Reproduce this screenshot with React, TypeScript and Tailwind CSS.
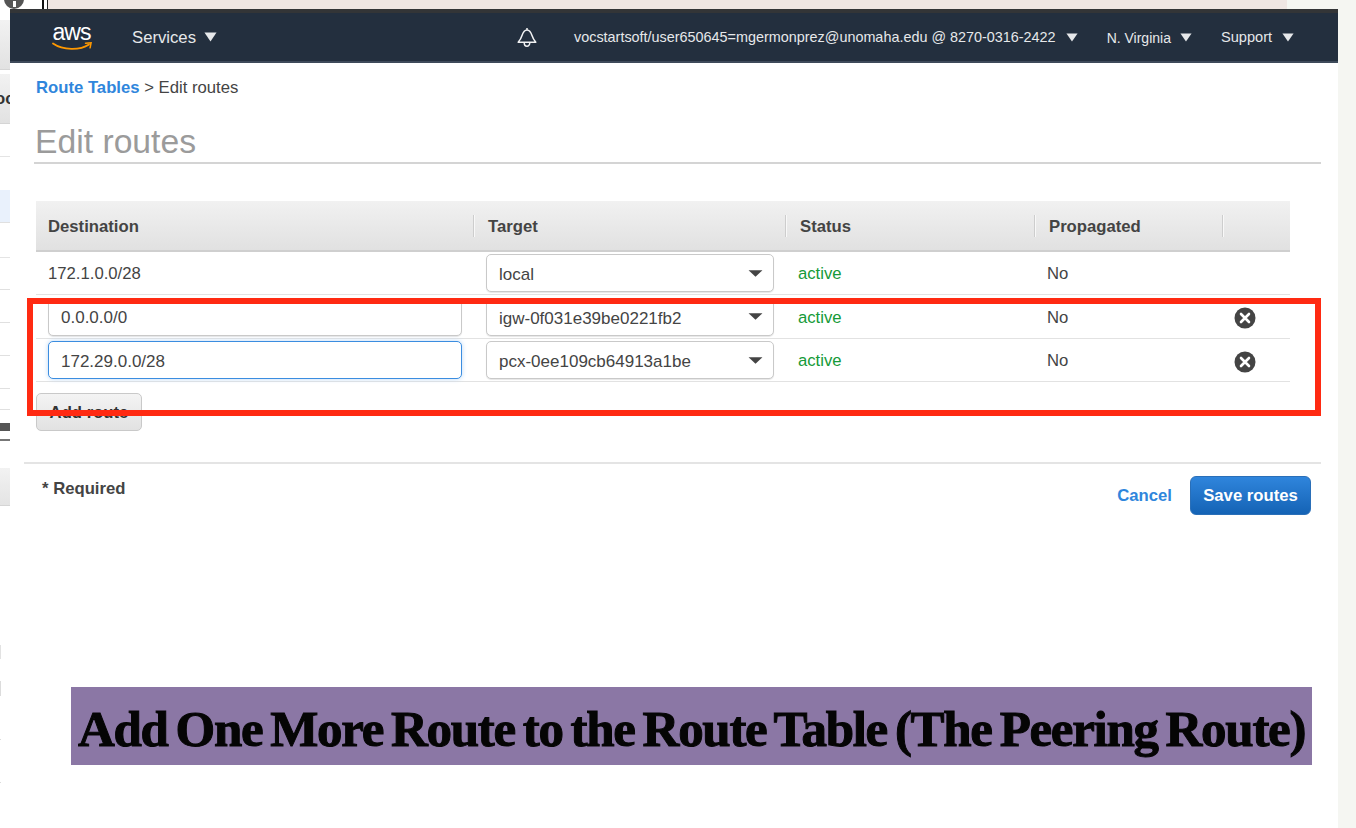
import React from 'react';

const Caret = ({ className }: { className: string }) => (
  <svg viewBox="0 0 14 10" preserveAspectRatio="none" className={className} fill="currentColor">
    <path d="M0.5 0.5h13L7 9.5z" />
  </svg>
);

const RemoveIcon = () => (
  <svg viewBox="0 0 22 22" className="w-[22px] h-[22px]">
    <circle cx="11" cy="11" r="10.5" fill="#444" />
    <path d="M7 7l8 8M15 7l-8 8" stroke="#fff" strokeWidth="2.6" strokeLinecap="round" />
  </svg>
);

const SelectBox = ({ value }: { value: string }) => (
  <div className="ml-3 flex h-[38px] w-[288px] items-center justify-between rounded-[5px] border border-[#c9c9c9] bg-white pl-[12px] pr-[10px] shadow-[0_1px_1px_#e6e6e6]">
    <span className="pt-[4px] text-[17px]">{value}</span>
    <Caret className="h-[7px] w-[15px] text-[#444]" />
  </div>
);

const InputBox = ({ value, focused }: { value: string; focused?: boolean }) => (
  <div
    className={
      focused
        ? 'ml-3 flex h-[38px] w-[414px] items-center rounded-[5px] border border-[#3b8de0] bg-white pl-[12px] pt-[4px] text-[17px] shadow-[0_0_5px_#bcd8f5]'
        : 'ml-3 flex h-[38px] w-[414px] items-center rounded-[5px] border border-[#c9c9c9] bg-white pl-[12px] pt-[2px] text-[17px] shadow-[0_1px_1px_#e6e6e6]'
    }
  >
    {value}
  </div>
);

const rows = [
  { dest: '172.1.0.0/28', target: 'local', height: 'h-[43px]' },
  { dest: '0.0.0.0/0', target: 'igw-0f031e39be0221fb2', height: 'h-[44px]', removable: true },
  { dest: '172.29.0.0/28', target: 'pcx-0ee109cb64913a1be', height: 'h-[43px]', removable: true, focused: true },
];

const headers = ['Destination', 'Target', 'Status', 'Propagated', ''];

const leftLines = ['mt-[31px]', 'mt-[32px]', 'mt-[32px]', 'mt-[32px]', 'mt-[20px]'];

const LeftSliver = () => (
  <div className="flex w-[10px] shrink-0 flex-col overflow-hidden bg-white">
    <div className="mt-[11px] h-[50px] border-b border-[#d5d5d5] bg-gradient-to-b from-[#f2f2f2] to-[#e2e2e2]" />
    <div className="mt-[4px] flex h-[50px] items-center whitespace-nowrap border-b border-[#d5d5d5] bg-gradient-to-b from-[#f2f2f2] to-[#e2e2e2] pl-0 text-[16.7px] font-bold text-[#333]">
      <span className="-ml-[5px]">oc</span>
    </div>
    <div className="mt-[32px] h-px bg-[#e4e4e4]" />
    <div className="mt-[33px] h-[33px] border-b border-[#e0e0e0] bg-[#e9f1fc]" />
    <div className="mt-[34px] h-px bg-[#e4e4e4]" />
    {leftLines.map((m, i) => (
      <div key={i} className={`${m} h-px bg-[#e0e0e0]`} />
    ))}
    <div className="mt-[13px] h-[8px] bg-[#555]" />
    <div className="mt-[8px] h-[2px] bg-[#777]" />
    <div className="mt-[27px] h-[38px] border-b border-[#d5d5d5] bg-gradient-to-b from-[#f2f2f2] to-[#e4e4e4]" />
    <div className="mt-[139px] h-[14px] w-px bg-[#e2e2e2]" />
    <div className="mt-[22px] h-[15px] w-px bg-[#dcdcdc]" />
    <div className="mt-[43px] h-px w-px bg-[#dcdcdc]" />
    <div className="mt-[42px] h-px w-px bg-[#dcdcdc]" />
  </div>
);

const NavBar = () => (
  <header className="flex h-[54px] items-center border-b-2 border-b-[#3e4a5a] border-t-4 border-t-[#333537] bg-[#232f3e] text-[#e6e8ea]">
    <div className="ml-[41px] flex w-[41px] flex-col items-center">
      <span className="h-[19px] text-[23px] leading-[19px] tracking-[-1px] text-white">aws</span>
      <svg viewBox="0 0 40 9" className="h-[9px] w-[40px]" fill="none">
        <path d="M1 1.5c10 7 27 7 36 1" stroke="#f90" strokeWidth="1.8" strokeLinecap="round" />
        <path d="M33.5 1.2l5.6-.4-1 5" stroke="#f90" strokeWidth="1.5" strokeLinecap="round" />
      </svg>
    </div>
    <span className="ml-[40px] pt-[2px] text-[16.7px]">Services</span>
    <Caret className="ml-[8px] h-[10px] w-[13px]" />
    <svg viewBox="0 0 20 21" className="ml-[300px] h-[21px] w-[20px]" fill="none" stroke="#f2f3f4" strokeWidth="1.5">
      <path d="M10 1v2M10 3c-3 0-4 2.500-5 5.500-.8 2.500-2 4.700-3.800 6.700h17.600c-1.800-2-3-4.200-3.800-6.700C14 5.500 13 3 10 3z" strokeLinejoin="round" />
      <path d="M7.200 15.500c0 5 5.600 5 5.600 0" />
    </svg>
    <span className="ml-[37px] pt-[2px] text-[14.4px]">
      vocstartsoft/user650645=mgermonprez@unomaha.edu @ 8270-0316-2422
    </span>
    <Caret className="ml-[10px] h-[9px] w-[12px]" />
    <span className="ml-[29px] pt-[2px] text-[14px]">N. Virginia</span>
    <Caret className="ml-[9px] h-[9px] w-[12px]" />
    <span className="ml-[29px] pt-[2px] text-[14.6px]">Support</span>
    <Caret className="ml-[10px] h-[9px] w-[12px]" />
  </header>
);

const RouteTable = () => (
  <div className="ml-[26px] mt-[37px] w-[1254px]">
    <div className="grid h-[51px] grid-cols-[438px_312px_249px_188px_67px] items-center border-b-2 border-[#cfcfcf] bg-gradient-to-b from-[#f1f1f1] to-[#e1e1e1] font-bold">
      {headers.map((h, i) => (
        <div key={i} className="flex h-[22px] items-center justify-between">
          <span className={i === 0 ? 'ml-3 mr-auto pt-[2px]' : 'ml-[14px] mr-auto pt-[2px]'}>{h}</span>
          {i < 4 && <span className="h-[22px] w-px bg-[#cdcdcd] shadow-[1px_0_0_#f8f8f8]" />}
        </div>
      ))}
    </div>
    {rows.map((r) => (
      <div
        key={r.dest}
        className={`grid ${r.height} grid-cols-[438px_312px_249px_188px_67px] items-center border-b border-[#e2e2e2]`}
      >
        {r.removable ? <InputBox value={r.dest} focused={r.focused} /> : <div className="ml-3 pt-[2px]">{r.dest}</div>}
        <SelectBox value={r.target} />
        <div className="ml-[12px] pt-[2px] text-[#159a38]">active</div>
        <div className="ml-[12px] pt-[2px]">No</div>
        <div className="ml-[11px] flex items-center pt-[3px]">{r.removable && <RemoveIcon />}</div>
      </div>
    ))}
    <button className="mt-[11px] h-[38px] w-[106px] rounded-[5px] border border-[#c9c9c9] bg-gradient-to-b from-[#f4f4f4] to-[#e2e2e2] pt-[2px] font-bold text-[#333]">
      Add route
    </button>
  </div>
);

export default function App() {
  return (
    <div className="relative h-[828px] w-[1356px] overflow-hidden bg-white font-['Liberation_Sans',sans-serif] text-[16.7px] text-[#444]">
      <div className="flex h-[9px]">
        <div className="w-[42px] bg-white" />
        <div className="w-[2px] bg-[#111]" />
        <div className="w-[3px] bg-white" />
        <div className="w-px bg-[#222]" />
        <div className="w-[1239px] bg-[#efe6e3]" />
        <div className="flex-1 bg-[#f5f6f2]" />
      </div>
      <div className="flex h-[819px]">
        <LeftSliver />
        <main className="w-[1328px] shrink-0 bg-white">
          <NavBar />
          <nav className="ml-[26px] mt-[15px] h-[20px] leading-[20px]">
            <span className="font-bold text-[#2f86dc]">Route Tables</span>
            <span> &gt; Edit routes</span>
          </nav>
          <h1 className="ml-[24px] mr-[17px] mt-[25px] h-[41px] border-b-2 border-[#d4d4d4] pl-px pt-px text-[33.7px] leading-[34px] text-[#9b9b9b]">
            Edit routes
          </h1>
          <RouteTable />
          <div className="ml-[14px] mr-[17px] mt-[31px] border-t-2 border-[#e4e4e4]">
            <div className="flex items-start justify-between pr-[10px]">
              <span className="ml-[18px] mt-[12px] font-bold">* Required</span>
              <div className="mt-[12px] flex items-center">
                <span className="font-bold text-[#2f86dc]">Cancel</span>
                <button className="ml-[18px] h-[39px] w-[121px] rounded-[6px] border border-[#2a6fb8] bg-gradient-to-b from-[#2f85dc] to-[#1463b5] font-bold text-white">
                  Save routes
                </button>
              </div>
            </div>
          </div>
          <div className="ml-[61px] mt-[172px] flex h-[78px] w-[1241px] items-center justify-center bg-[#8b77a5] pt-[6px] font-['Liberation_Serif',serif] text-[51px] font-bold tracking-[-1.3px] text-[#050505] [word-spacing:-3.5px] [-webkit-text-stroke:1px_#050505]">
            Add One More Route to the Route Table (The Peering Route)
          </div>
        </main>
        <div className="flex-1 bg-[#f5f6f2]" />
      </div>
      {/* overlays: the annotation box and the clipped icon of the window behind */}
      <div className="absolute left-[27px] top-[298px] h-[118px] w-[1294px] border-[6px] border-[#ff2a12]" />
      <div className="absolute left-[4px] top-[-11px] flex h-[20px] w-[20px] items-end justify-center rounded-full bg-[#555]">
        <span className="mb-[2px] h-[6px] w-[3px] bg-white" />
      </div>
    </div>
  );
}
